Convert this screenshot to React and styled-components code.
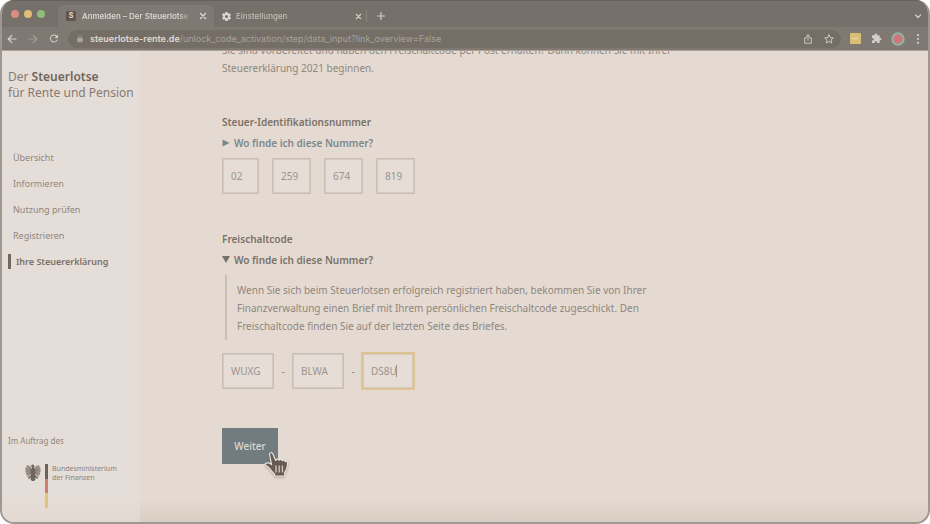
import React from 'react';
import styled, { createGlobalStyle } from 'styled-components';

const GlobalStyle = createGlobalStyle`
  * { box-sizing: border-box; }
  html { background: #fff; }
  body { margin: 0; font-family: "Noto Sans", sans-serif; }
  h1, h2, p, ul { margin: 0; padding: 0; }
  button, input { font: inherit; margin: 0; }
`;

const c = {
  strip: '#76706a',
  toolbar: '#807973',
  field: '#746e67',
  page: '#e4dad1',
  side: '#e5ddd7',
  text: '#90877e',
  bold: '#7a7168',
  link: '#7b898d',
  line: '#c9bfb4',
  light: '#d5cec8',
};

const Window = styled.div`
  display: flex;
  flex-direction: column;
  height: 100vh;
  border: solid #9f9892;
  border-width: 0 2px 2px;
  border-radius: 14px;
  overflow: hidden;
  background: ${c.page};
`;

const TabStrip = styled.header`
  display: flex;
  align-items: center;
  height: 27px;
  flex: none;
  padding: 4px 5px 0 9px;
  border-top: 1px solid #67625d;
  background: ${c.strip};
  font: 500 8px/22px Inter, sans-serif;
  color: ${c.light};
`;

const Lights = styled.div`
  display: flex;
  gap: 5px;
  width: 47px;
  margin-top: -4px;
`;

const Light = styled.span`
  width: 8px;
  height: 8px;
  border-radius: 50%;
  background: ${(p) => p.$color};
`;

const Tab = styled.div`
  display: flex;
  align-items: center;
  width: ${(p) => (p.$active ? 156 : 152)}px;
  height: 23px;
  padding: 0 ${(p) => (p.$active ? 6 : 3)}px 0 ${(p) => (p.$active ? 8 : 7)}px;
  gap: ${(p) => (p.$active ? 6 : 4)}px;
  border-radius: 6px 6px 0 0;
  background: ${(p) => (p.$active ? c.toolbar : 'transparent')};
  color: ${(p) => (p.$active ? '#e2dcd6' : '#c4bdb7')};
`;

const TabTitle = styled.span`
  flex: 1;
  min-width: 0;
  overflow: hidden;
  white-space: nowrap;
  mask-image: linear-gradient(90deg, #000 88%, transparent);
`;

const Favicon = styled.span`
  width: 10px;
  height: 10px;
  border-radius: 1px;
  background: #60554f;
  color: #e2dcd6;
  font: bold 7px/10px Inter, sans-serif;
  text-align: center;
`;

const IconButton = styled.button`
  display: flex;
  align-items: center;
  justify-content: center;
  flex: none;
  width: ${(p) => p.$w || 12}px;
  height: 14px;
  padding: 0;
  border: 0;
  background: none;
  color: ${(p) => p.$color || c.light};
`;

const Divider = styled.span`
  width: 1px;
  height: 12px;
  margin-right: 8px;
  background: #918a83;
`;

const Spacer = styled.span`
  flex: 1;
`;

const Toolbar = styled.div`
  display: flex;
  align-items: center;
  flex: none;
  height: 23px;
  padding: 0 6px 0 4px;
  background: ${c.toolbar};
`;

const NavButtons = styled.div`
  display: flex;
  gap: 9px;
  width: 62px;
`;

const AddressBar = styled.div`
  display: flex;
  align-items: center;
  flex: 1;
  min-width: 0;
  height: 18px;
  padding: 0 6px;
  border-radius: 9px;
  background: ${c.field};
  color: #a9a29b;
  font: 9px/18px Inter, sans-serif;
`;

const Url = styled.span`
  flex: 1;
  margin-left: 4px;
  white-space: nowrap;
  overflow: hidden;
  b { font-weight: 600; color: #e0dad4; }
`;

const BarActions = styled.div`
  display: flex;
  gap: 9px;
`;

const Extensions = styled.div`
  display: flex;
  align-items: center;
  gap: 9px;
  margin-left: 8px;
`;

const Body = styled.div`
  display: flex;
  flex: 1;
  min-height: 0;
  overflow: hidden;
  border-top: 1px solid #aaa199;
  background: linear-gradient(transparent 95%, rgba(160, 145, 120, 0.16));
`;

const Sidebar = styled.aside`
  display: flex;
  flex-direction: column;
  flex: none;
  width: 138px;
  padding: 18px 0 14px 6px;
  background: linear-gradient(${c.side} 94%, #e2d9d2);
  color: ${c.text};
`;

const Brand = styled.h1`
  font-size: 12px;
  line-height: 16px;
  font-weight: 400;
  white-space: nowrap;
  color: #857b73;
  strong { font-weight: 600; color: #70665e; }
`;

const NavList = styled.ul`
  margin-top: 43px;
  list-style: none;
`;

const NavItem = styled.li`
  display: flex;
  align-items: center;
  height: 26px;
`;

const NavLink = styled.a`
  padding-left: 5px;
  border-left: ${(p) => (p.$active ? '3px solid #71675f' : '0')};
  font-size: 9px;
  line-height: 15px;
  font-weight: ${(p) => (p.$active ? 600 : 400)};
  color: ${(p) => (p.$active ? '#7a7067' : c.text)};
  text-decoration: none;
`;

const Sponsor = styled.div`
  margin-top: auto;
  font-size: 8px;
  line-height: 14px;
`;

const Ministry = styled.div`
  display: flex;
  margin-top: 16px;
  padding-left: 17px;
  font-size: 7px;
  line-height: 9px;
  color: #8c837c;
`;

const Flag = styled.span`
  width: 3px;
  height: 44px;
  margin: 0 4px;
  background: linear-gradient(#6c625c 33%, #d17c70 33% 66%, #e0c47a 66%);
`;

const Main = styled.main`
  flex: 1;
  min-width: 0;
  padding-left: 82px;
  color: ${c.text};
  font-size: 10px;
  line-height: 18px;
`;

/* The page is scrolled so that the intro is half under the toolbar. */
const Form = styled.form`
  max-width: 460px;
  margin-top: -10px;
`;

const Group = styled.section`
  display: flex;
  flex-direction: column;
  align-items: flex-start;
  margin-top: 36px;
`;

const GroupTitle = styled.h2`
  font-size: 10px;
  line-height: 18px;
  font-weight: 600;
  color: ${c.bold};
`;

const Help = styled.details`
  margin-top: 3px;
`;

const Summary = styled.summary`
  display: flex;
  align-items: center;
  gap: 4px;
  list-style: none;
  font-weight: 600;
  color: ${(p) => (p.$open ? c.bold : c.link)};
`;

const HelpText = styled.p`
  margin: 6px 0 7px 3px;
  padding: 6px 0 5px 10px;
  border-left: 2px solid ${c.line};
`;

const Fields = styled.div`
  display: flex;
  align-items: center;
  gap: ${(p) => p.$gap || 0}px;
  margin-top: 6px;
`;

const Dash = styled.span`
  width: 18px;
  text-align: center;
`;

const FieldBox = styled.label`
  position: relative;
  display: block;
`;

const Field = styled.input`
  display: block;
  width: ${(p) => p.$w}px;
  height: 36px;
  padding: 0 8px;
  border: 1px solid ${c.line};
  outline: ${(p) => (p.$focus ? '2px solid #dfc492' : '0')};
  outline-offset: -1px;
  box-shadow: inset 0 0 0 1px #d2c9bf;
  border-radius: 0;
  background: #e5ddd6;
  color: #9c948c;
`;

const Caret = styled.span`
  position: absolute;
  top: 12px;
  right: 17px;
  width: 1px;
  height: 12px;
  background: #9a9189;
`;

const Submit = styled.button`
  width: 56px;
  height: 36px;
  margin-top: 39px;
  padding: 0;
  border: 0;
  background: #727b7f;
  color: #dcd9d5;
  font-weight: 500;
`;

const SubmitBox = styled.div`
  position: relative;
  width: 56px;
`;

const Pointer = styled.svg`
  position: absolute;
  left: 42px;
  bottom: -15px;
  filter: drop-shadow(0 1px 1px rgba(90, 75, 60, 0.4));
`;

const Stroke = ({ size = 10, w = 1.2, d, fill = 'none' }) => (
  <svg width={size} height={size} viewBox="0 0 10 10" fill={fill} stroke="currentColor" strokeWidth={w} strokeLinecap="round" strokeLinejoin="round" aria-hidden="true">
    <path d={d} />
  </svg>
);

const Material = ({ size = 12, d }) => (
  <svg width={size} height={size} viewBox="0 0 24 24" fill="currentColor" aria-hidden="true"><path d={d} /></svg>
);

const GEAR = 'M19.4 13c.1-.3.1-.6.1-1s0-.7-.1-1l2.1-1.600c.2-.2.3-.4.1-.7l-2-3.400c-.1-.2-.4-.3-.6-.2l-2.500 1c-.5-.4-1.100-.7-1.700-1L14.500 2.400c0-.2-.2-.4-.5-.4h-4c-.3 0-.5.2-.5.4l-.4 2.700c-.6.2-1.100.6-1.700 1l-2.500-1c-.2-.1-.5 0-.6.2l-2 3.400c-.1.2-.1.5.1.7L4.600 11c-.1.3-.1.7-.1 1s0 .7.1 1l-2.100 1.600c-.2.2-.3.4-.1.7l2 3.400c.1.2.4.3.6.2l2.500-1c.5.4 1.100.7 1.700 1l.4 2.700c0 .2.2.4.5.4h4c.3 0 .5-.2.5-.4l.4-2.700c.6-.2 1.100-.6 1.700-1l2.500 1c.2.1.5 0 .6-.2l2-3.400c.1-.2.1-.5-.1-.7L19.400 13zM12 15.500a3.500 3.500 0 1 1 0-7 3.500 3.500 0 0 1 0 7z';
const PUZZLE = 'M20.500 11H19V7a2 2 0 0 0-2-2h-4V3.500a2.500 2.500 0 0 0-5 0V5H4a2 2 0 0 0-2 2v3.800h1.500a2.700 2.700 0 0 1 0 5.400H2V20a2 2 0 0 0 2 2h3.800v-1.500a2.700 2.700 0 0 1 5.400 0V22H17a2 2 0 0 0 2-2v-4h1.500a2.500 2.500 0 0 0 0-5z';
const REFRESH = 'M17.650 6.350A8 8 0 1 0 19.730 14h-2.080A6 6 0 1 1 12 6c1.660 0 3.140.69 4.220 1.780L13 11h7V4l-2.350 2.350z';
const LOCK = 'M18 8h-1V6A5 5 0 0 0 7 6v2H6a2 2 0 0 0-2 2v10a2 2 0 0 0 2 2h12a2 2 0 0 0 2-2V10a2 2 0 0 0-2-2zM9 6a3 3 0 0 1 6 0v2H9z';
const CLOSE = 'M2.500 2.500l5 5M7.500 2.500l-5 5';

const Eagle = () => (
  <svg width="16" height="17" viewBox="0 0 32 34" aria-hidden="true">
    <path d="M13 9C11 3 5 1 3 4 0 9 0 19 5 25l7-5zM19 9c2-6 8-8 10-5 3 5 3 15-2 21l-7-5z" fill="#a79e97" />
    <path d="M13 10L4 4M13 12L1 9M13 14L1 14M13 16L2 20M13 18L5 25M19 10l9-6M19 12l12-3M19 14h12M19 16l11 4M19 18l8 7" stroke="#756b64" strokeWidth="1.400" />
    <path d="M12 3l3-2 3 1 1 3-1 3 3 4-1 9 2 3 4 3-1 3-5-3 1 4-3 3h-4l-3-3 1-4-5 3-1-3 4-3 2-3-1-9 3-4z" fill="#6f665f" />
  </svg>
);

const Triangle = ({ open }) => (
  <svg width="8" height="8" viewBox="0 0 8 8" fill="currentColor" aria-hidden="true">
    <path d={open ? 'M0 0h8L4 7z' : 'M0.500 0.500v7L7.500 4z'} />
  </svg>
);

const navItems = ['Übersicht', 'Informieren', 'Nutzung prüfen', 'Registrieren', 'Ihre Steuererklärung'];
const idParts = [['02', 37], ['259', 39], ['674', 39], ['819', 39]];
const codeParts = ['WUXG', 'BLWA', 'DS8U'];

function Browser() {
  return (
    <>
      <TabStrip>
        <Lights>
          <Light $color="#d98c80" />
          <Light $color="#dfbd76" />
          <Light $color="#8fbd7c" />
        </Lights>
        <Tab $active>
          <Favicon>S</Favicon>
          <TabTitle>Anmelden – Der Steuerlotse für</TabTitle>
          <IconButton $w={10} $color="#e2dcd6" aria-label="Tab schließen"><Stroke d={CLOSE} /></IconButton>
        </Tab>
        <Tab>
          <IconButton as="span" $w={11} $color="#dcd6d0"><Material size={11} d={GEAR} /></IconButton>
          <TabTitle>Einstellungen</TabTitle>
          <IconButton $w={10} aria-label="Tab schließen"><Stroke size={9} d={CLOSE} /></IconButton>
        </Tab>
        <Divider />
        <IconButton aria-label="Neuer Tab"><Stroke d="M5 1.500v7M1.500 5h7" /></IconButton>
        <Spacer />
        <IconButton $w={10} aria-label="Tabs suchen"><Stroke d="M2.500 4L5 6.500 7.500 4" /></IconButton>
      </TabStrip>
      <Toolbar>
        <NavButtons>
          <IconButton aria-label="Zurück"><Stroke d="M9 5H1.200M4.700 1.500L1.200 5l3.500 3.500" /></IconButton>
          <IconButton $color="#a19a93" aria-label="Vorwärts"><Stroke d="M1 5h7.800M5.300 1.500L8.800 5 5.300 8.500" /></IconButton>
          <IconButton aria-label="Neu laden"><Material size={13} d={REFRESH} /></IconButton>
        </NavButtons>
        <AddressBar>
          <IconButton $color="#aaa39c" aria-label="Sichere Verbindung"><Material size={8} d={LOCK} /></IconButton>
          <Url><b>steuerlotse-rente.de</b>/unlock_code_activation/step/data_input?link_overview=False</Url>
          <BarActions>
            <IconButton aria-label="Teilen"><Stroke w={0.9} d="M3.500 3.800H1.700v5.400h6.600V3.800H6.500M5 6.500V.8M3.300 2.400L5 .8l1.700 1.600" /></IconButton>
            <IconButton aria-label="Lesezeichen"><Stroke w={0.9} d="M5 .8l1.300 2.800 3 .3L7 6l.7 3L5 7.400 2.300 9 3 6 .7 3.900l3-.3z" /></IconButton>
          </BarActions>
        </AddressBar>
        <Extensions>
          <IconButton aria-label="Erweiterung">
            <svg width="11" height="11" viewBox="0 0 11 11" aria-hidden="true"><rect width="11" height="11" rx="1" fill="#d8bd72" /><path d="M2 5.500h7" stroke="#f0e4c4" strokeWidth="1.300" strokeDasharray="1.300 1" /></svg>
          </IconButton>
          <IconButton aria-label="Erweiterungen"><Material size={11} d={PUZZLE} /></IconButton>
          <IconButton $w={14} aria-label="Profil">
            <svg width="14" height="14" viewBox="0 0 14 14" aria-hidden="true"><circle cx="7" cy="7" r="5.700" fill="#d0757a" stroke="#8fb5a2" strokeWidth="2" /></svg>
          </IconButton>
          <IconButton $w={8} aria-label="Menü">
            <svg width="8" height="10" viewBox="0 0 8 10" fill="currentColor" aria-hidden="true"><circle cx="4" cy="1.200" r="1.100" /><circle cx="4" cy="5" r="1.100" /><circle cx="4" cy="8.800" r="1.100" /></svg>
          </IconButton>
        </Extensions>
      </Toolbar>
    </>
  );
}

export default function App() {
  return (
    <Window>
      <GlobalStyle />
      <Browser />
      <Body>
        <Sidebar>
          <Brand>Der <strong>Steuerlotse</strong><br />für Rente und Pension</Brand>
          <nav>
            <NavList>
              {navItems.map((item, i) => (
                <NavItem key={item}><NavLink href="#" $active={i === 4}>{item}</NavLink></NavItem>
              ))}
            </NavList>
          </nav>
          <Sponsor>Im Auftrag des</Sponsor>
          <Ministry>
            <Eagle />
            <Flag />
            <span>Bundesministerium<br />der Finanzen</span>
          </Ministry>
        </Sidebar>
        <Main>
          <Form onSubmit={(e) => e.preventDefault()}>
            <p>
              Sie sind vorbereitet und haben den Freischaltcode per Post erhalten? Dann können Sie mit Ihrer<br />
              Steuererklärung 2021 beginnen.
            </p>
            <Group>
              <GroupTitle>Steuer-Identifikationsnummer</GroupTitle>
              <Help>
                <Summary><Triangle />Wo finde ich diese Nummer?</Summary>
              </Help>
              <Fields $gap={13}>
                {idParts.map(([value, w], i) => (
                  <Field key={value} $w={w} defaultValue={value} aria-label={`Steuer-Identifikationsnummer Teil ${i + 1}`} />
                ))}
              </Fields>
            </Group>
            <Group>
              <GroupTitle>Freischaltcode</GroupTitle>
              <Help open>
                <Summary $open><Triangle open />Wo finde ich diese Nummer?</Summary>
                <HelpText>
                  Wenn Sie sich beim Steuerlotsen erfolgreich registriert haben, bekommen Sie von Ihrer<br />
                  Finanzverwaltung einen Brief mit Ihrem persönlichen Freischaltcode zugeschickt. Den<br />
                  Freischaltcode finden Sie auf der letzten Seite des Briefes.
                </HelpText>
              </Help>
              <Fields>
                {codeParts.map((value, i) => (
                  <React.Fragment key={value}>
                    {i > 0 && <Dash>-</Dash>}
                    <FieldBox>
                      <Field $w={52} $focus={i === 2} defaultValue={value} aria-label={`Freischaltcode Teil ${i + 1}`} />
                      {i === 2 && <Caret />}
                    </FieldBox>
                  </React.Fragment>
                ))}
              </Fields>
            </Group>
            <SubmitBox>
              <Submit type="submit">Weiter</Submit>
              <Pointer width="25" height="28" viewBox="0 0 25 28" aria-hidden="true">
                <path d="M5.500 3.500C5.300 1.500 8 1 8.900 3L11.700 9.500C12.300 7.700 14.600 7.700 15.200 9.300 16 8 17.900 8.200 18.400 9.800 19.300 8.800 21 9.100 21.300 10.600 22.700 9.900 23.800 10.800 23.600 12.500 23.300 16 22.800 19 20.700 21.500V25H10.500V23C8 21.200 7 18.800 5 16.800 3.300 15.100 1 14.700 1.200 13.100 2.200 11.300 5.500 11.700 7.600 13.600Z" fill="#665a52" stroke="#eae4de" strokeWidth="1.200" strokeLinejoin="round" />
                <path d="M12 14.500v7M15.200 14.500v7M18.400 14.500v7" stroke="#d3cbc4" strokeWidth="1.300" />
              </Pointer>
            </SubmitBox>
          </Form>
        </Main>
      </Body>
    </Window>
  );
}
